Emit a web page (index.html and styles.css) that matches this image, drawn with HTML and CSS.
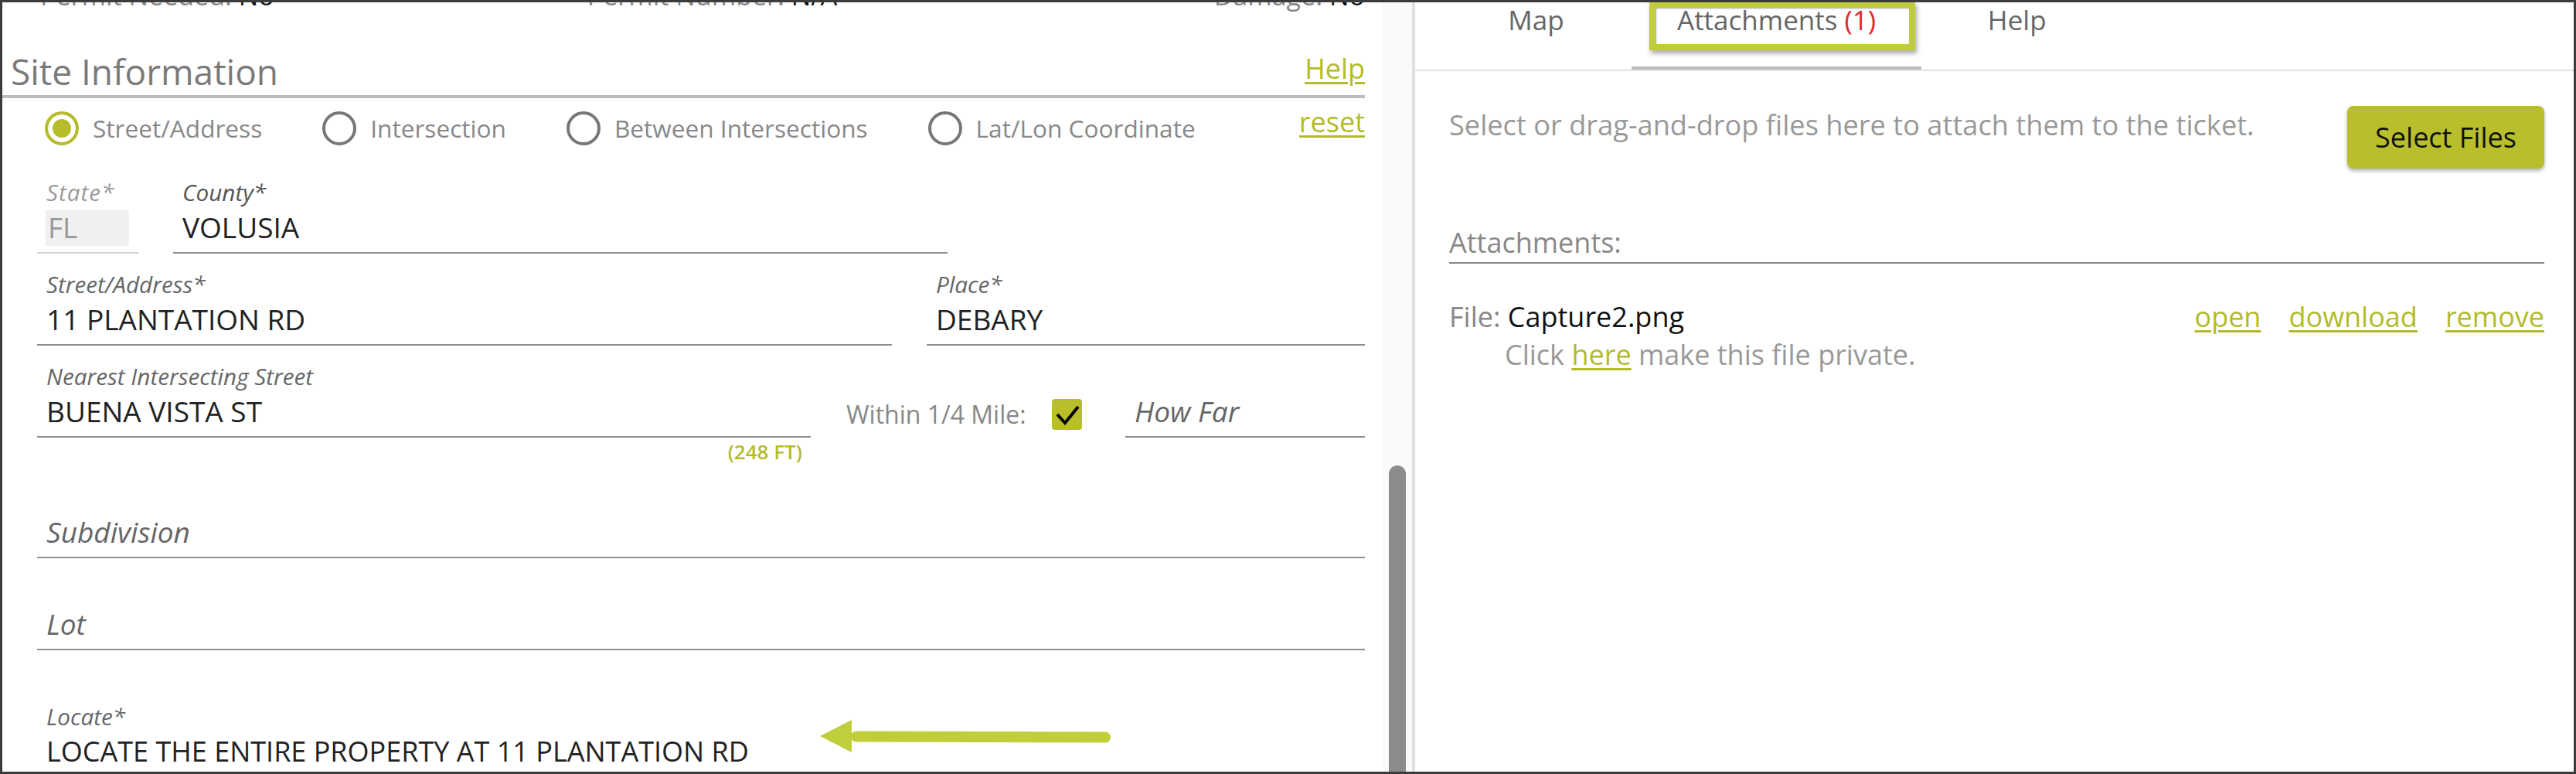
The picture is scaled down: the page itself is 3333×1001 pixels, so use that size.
FILE: index.html
```html
<!DOCTYPE html>
<html>
<head>
    <title>Ticket - Site Information</title>
    <link rel="stylesheet" href="styles.css">
</head>
<body>
<div class="frame">
    <div class="left">
        <div class="summary">
            <span class="sum-item"><span class="sum-label">Permit Needed:</span> <span class="sum-value">No</span></span>
            <span class="sum-item sum-mid"><span class="sum-label">Permit Number:</span> <span class="sum-value">N/A</span></span>
            <span class="sum-item sum-end"><span class="sum-label">Damage:</span> <span class="sum-value">No</span></span>
        </div>

        <div class="section-head">
            <h2>Site Information</h2>
            <a href="#" class="link head-help">Help</a>
        </div>

        <div class="fields">
            <div class="radios">
                <label class="opt"><span class="radio on"></span>Street/Address</label>
                <label class="opt"><span class="radio"></span>Intersection</label>
                <label class="opt"><span class="radio"></span>Between Intersections</label>
                <label class="opt"><span class="radio"></span>Lat/Lon Coordinate</label>
                <a href="#" class="link reset">reset</a>
            </div>

            <div class="row row-first">
                <div class="field state">
                    <span class="lbl">State*</span>
                    <div class="val"><span class="ro">FL</span></div>
                </div>
                <div class="field county">
                    <span class="lbl">County*</span>
                    <div class="val">VOLUSIA</div>
                </div>
            </div>

            <div class="row">
                <div class="field grow">
                    <span class="lbl">Street/Address*</span>
                    <div class="val">11 PLANTATION RD</div>
                </div>
                <div class="field place">
                    <span class="lbl">Place*</span>
                    <div class="val">DEBARY</div>
                </div>
            </div>

            <div class="row row-near">
                <div class="field nearest">
                    <span class="lbl">Nearest Intersecting Street</span>
                    <div class="val">BUENA VISTA ST</div>
                </div>
                <span class="within">Within 1/4 Mile:</span>
                <span class="check">
                    <svg width="39" height="40" viewBox="0 0 39 40"><path d="M7 20 L17 31 L34 10" fill="none" stroke="#000" stroke-width="4"/></svg>
                </span>
                <div class="field howfar">
                    <span class="lbl"></span>
                    <div class="val ph">How Far</div>
                </div>
            </div>
            <div class="hint">(248 FT)</div>

            <div class="row">
                <div class="field grow">
                    <span class="lbl"></span>
                    <div class="val ph">Subdivision</div>
                </div>
            </div>

            <div class="row">
                <div class="field grow">
                    <span class="lbl"></span>
                    <div class="val ph">Lot</div>
                </div>
            </div>

            <div class="row row-locate">
                <div class="field grow locate">
                    <span class="lbl">Locate*</span>
                    <div class="val">LOCATE THE ENTIRE PROPERTY AT 11 PLANTATION RD</div>
                </div>
            </div>
        </div>

        <svg class="arrow" width="380" height="48" viewBox="0 0 380 48">
            <polygon points="3,24 44,3 44,45" fill="#c0ce3c"/>
            <line x1="50" y1="24.5" x2="372" y2="25.5" stroke="#c0ce3c" stroke-width="14" stroke-linecap="round"/>
        </svg>
    </div>

    <div class="scrollbar"><div class="thumb"></div></div>

    <div class="right">
        <div class="tabs">
            <span class="tab">Map</span>
            <span class="tab active">Attachments <span class="count">(1)</span><span class="mark"></span></span>
            <span class="tab">Help</span>
        </div>

        <div class="attach">
            <div class="intro">
                <p>Select or drag-and-drop files here to attach them to the ticket.</p>
                <button class="btn">Select Files</button>
            </div>

            <div class="att-title">Attachments:</div>

            <div class="file">
                <div class="file-line">
                    <span><span class="muted">File:</span> Capture2.png</span>
                    <span class="actions">
                        <a href="#" class="link">open</a>
                        <a href="#" class="link">download</a>
                        <a href="#" class="link">remove</a>
                    </span>
                </div>
                <div class="private">Click <a href="#" class="link">here</a> make this file private.</div>
            </div>
        </div>
    </div>
</div>
</body>
</html>
```

FILE: styles.css
```css
html, body { margin: 0; padding: 0; background: #fff; }
body { font-family: "Open Sans", "Noto Sans", sans-serif; color: #222; }

.frame { display: flex; width: 3333px; height: 1001px; box-sizing: border-box; border: 3px solid #3b3b3b; overflow: hidden; }

.link { color: #b3bb2a; text-decoration: underline; text-underline-offset: 4px; text-decoration-thickness: 3px; }

/* left form */
.left { position: relative; width: 1786px; flex: none; overflow: hidden; padding-right: 23px; box-sizing: border-box; }

.summary { display: flex; margin-top: -31px; padding-left: 49px; font-size: 34px; line-height: 44px; white-space: nowrap; }
.sum-label { color: #888; }
.sum-value { color: #111; }
.sum-mid { margin-left: 405px; }
.sum-end { margin-left: auto; }

.section-head { display: flex; align-items: flex-end; justify-content: space-between; margin-top: 48px; padding: 0 0 3px 11px; border-bottom: 4px solid #bdbdbd; }
.section-head h2 { margin: 0; font-size: 46px; line-height: 56px; font-weight: 400; color: #7a7a7a; }
.head-help { font-size: 36px; line-height: 44px; margin-bottom: 9px; }

.fields { padding-left: 45px; }

.radios { display: flex; align-items: center; gap: 78px; margin-top: 17px; padding-left: 10px; height: 44px; }
.opt { display: flex; align-items: center; gap: 18px; font-size: 31.6px; line-height: 44px; color: #888; }
.radio { width: 44px; height: 44px; box-sizing: border-box; border: 4px solid #777; border-radius: 50%; flex: none; }
.radio.on { border-color: #b5bd2b; background: #b5bd2b; box-shadow: inset 0 0 0 6px #fff; }
.reset { margin-left: auto; align-self: flex-start; margin-top: -8px; font-size: 36px; line-height: 44px; }

.row { display: flex; gap: 45px; margin-top: 24px; }
.row-first { margin-top: 45px; }
.field { padding: 0 12px 10px; border-bottom: 2px solid #8e8e8e; box-sizing: border-box; }
.field.grow { flex: 1; }
.lbl { display: block; height: 32px; font-size: 29.7px; line-height: 32px; font-style: italic; color: #666; white-space: nowrap; }
.val { margin-top: 7px; height: 44px; font-size: 37px; line-height: 44px; color: #222; white-space: nowrap; }
.val.ph { font-style: italic; color: #666; }

.state { width: 131px; border-bottom-color: #d2d2d2; }
.state .lbl { color: #9a9a9a; letter-spacing: 1px; }
.state .ro { display: block; margin-left: -1px; padding-left: 3px; height: 46px; background: #f0f0f0; color: #999; }
.county { width: 1002px; }
.county .lbl { color: #555; }
.place { width: 567px; }

.row-near { gap: 0; align-items: flex-end; }
.nearest { width: 1001px; }
.within { margin-left: 46px; margin-bottom: 8px; font-size: 32px; line-height: 44px; color: #888; white-space: nowrap; }
.check { display: block; width: 39px; height: 40px; margin: 0 0 10px 33px; background: #b8bf2b; border-radius: 4px; }
.check svg { display: block; }
.howfar { width: 310px; margin-left: auto; }

.hint { width: 1001px; box-sizing: border-box; padding-right: 11px; text-align: right; font-size: 26px; line-height: 37px; font-weight: 600; color: #b5bd2b; }

.row-locate { margin-top: 70px; }
.locate { border-bottom: 0; }
.locate .val { margin-top: 7px; font-size: 36px; }

.arrow { position: absolute; left: 1055px; top: 925px; }

/* scrollbar between panes */
.scrollbar { width: 38px; flex: none; background: #fafafa; padding-top: 599px; box-sizing: border-box; }
.thumb { width: 22px; height: 500px; margin-left: 8px; background: #8b8b8b; border-radius: 11px 11px 0 0; }

/* right attachments pane */
.right { flex: 1; border-left: 4px solid #e0e0e0; }

.tabs { display: flex; padding-left: 33px; border-bottom: 2px solid #e3e3e3; }
.tab { position: relative; min-width: 247px; box-sizing: border-box; padding: 1px 54px 38px; text-align: center; font-size: 35px; line-height: 44px; color: #666; border-bottom: 4px solid transparent; white-space: nowrap; }
.tab.active { padding-left: 59px; padding-right: 59px; border-bottom-color: #bbb; }
.count { color: #e02a2a; }
.mark { position: absolute; left: 23px; top: -1px; width: 344px; height: 63px; box-sizing: border-box; border: 8px solid #c0cc3b; box-shadow: 2px 4px 6px rgba(0,0,0,0.35), inset 1px 1px 2px rgba(0,0,0,0.35); }

.attach { padding: 0 38px 0 44px; }
.intro { display: flex; justify-content: space-between; align-items: flex-start; padding-top: 45px; }
.intro p { margin: 2px 0 0; font-size: 36.2px; line-height: 44px; color: #999; }
.btn { width: 255px; height: 81px; border: 0; border-radius: 8px; background: #b8bf2b; box-shadow: 0 3px 5px rgba(0,0,0,0.3); font-family: inherit; font-size: 36px; line-height: 44px; color: #111; padding: 0; }

.att-title { margin-top: 76px; padding-bottom: 5px; border-bottom: 2px solid #888; font-size: 36px; line-height: 40px; color: #888; }

.file { margin-top: 47px; font-size: 36px; line-height: 44px; color: #111; }
.file-line { display: flex; justify-content: space-between; }
.muted { color: #888; }
.actions { display: flex; gap: 36px; }
.private { margin-top: 5px; padding-left: 72px; color: #999; }
```
